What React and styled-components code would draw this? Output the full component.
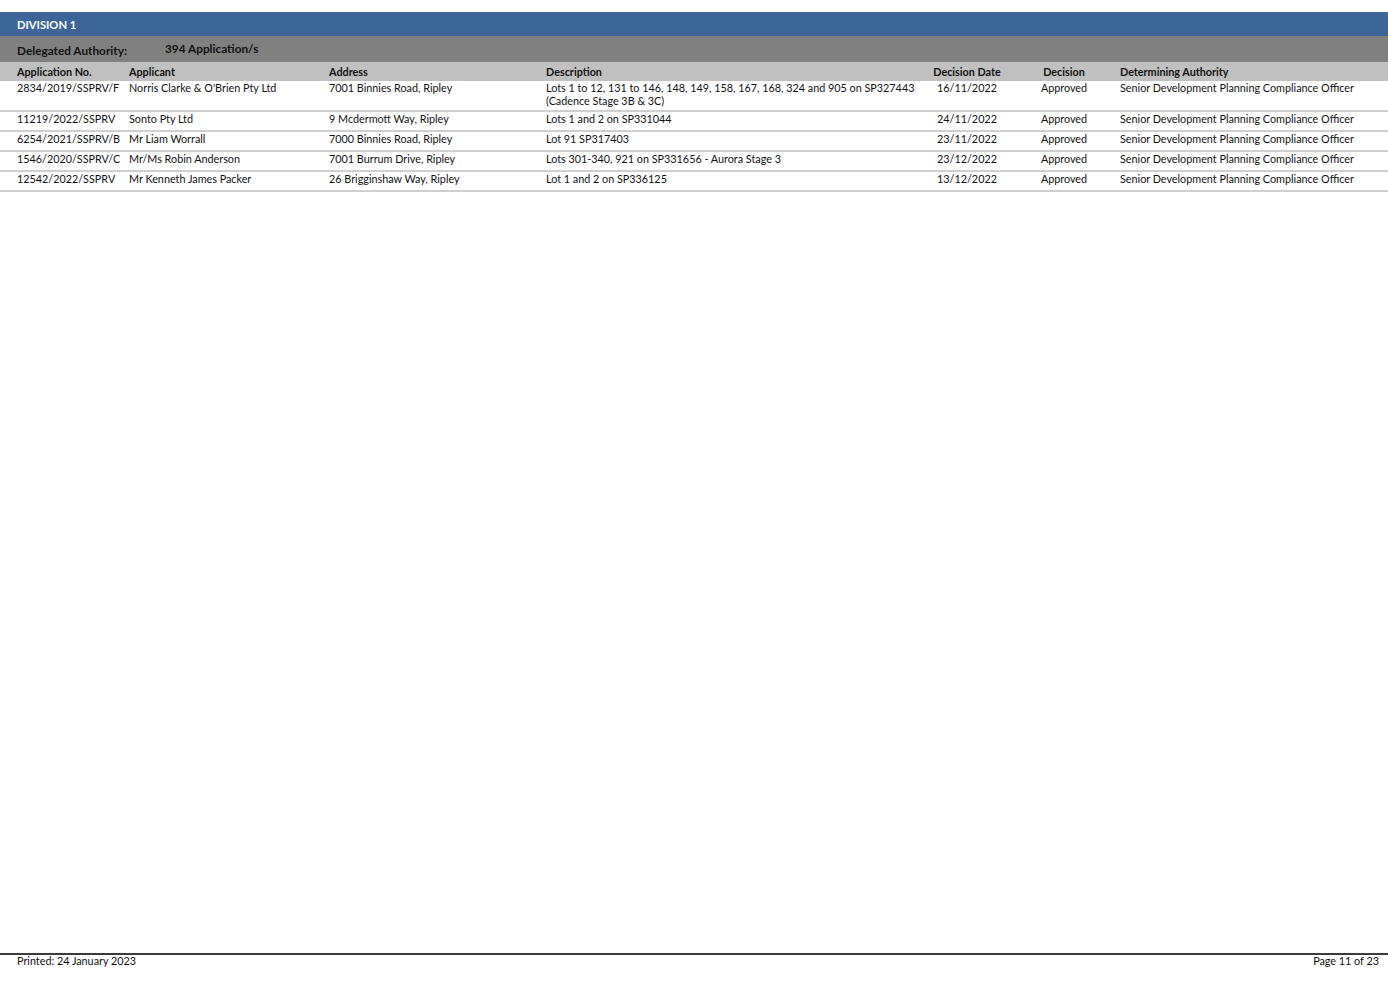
import styled, { createGlobalStyle } from "styled-components";

const GlobalStyle = createGlobalStyle`
  html, body {
    margin: 0;
    padding: 0;
    background: #ffffff;
  }
  body {
    font-family: Lato, "Liberation Sans", sans-serif;
    font-size: 10.8px;
    color: #111;
  }
`;

const COLUMNS = "112px 200px 217px 376px 90px 104px 1fr";

const Page = styled.div`
  display: flex;
  flex-direction: column;
  height: 981px;
  padding-top: 12px;
  box-sizing: border-box;
`;

const DivisionBar = styled.div`
  height: 24px;
  display: flex;
  align-items: center;
  padding-left: 17px;
  background: #3b6697;
  color: #fff;
  font-weight: 700;
  font-size: 11.2px;
`;

const AuthorityBar = styled.div`
  height: 26px;
  display: flex;
  align-items: center;
  padding-left: 17px;
  background: #808080;
  color: #111;
  font-weight: 700;
  font-size: 11.8px;
`;

const AuthorityLabel = styled.span`
  width: 148px;
  padding-top: 2px;
`;

const Count = styled.span`
  padding-bottom: 1px;
`;

const HeaderRow = styled.div`
  display: grid;
  grid-template-columns: ${COLUMNS};
  height: 19px;
  align-items: center;
  padding-left: 17px;
  background: #c0c0c0;
  font-weight: 700;
`;

const Row = styled.div`
  display: grid;
  grid-template-columns: ${COLUMNS};
  box-sizing: border-box;
  min-height: 20px;
  padding: 0 0 3px 17px;
  line-height: 13px;
  border-bottom: 2px solid #cfcfcf;
`;

const Cell = styled.div`
  text-align: ${(p) => (p.$center ? "center" : "left")};
  padding-left: ${(p) => (p.$indent ? "4px" : "0")};
  white-space: ${(p) => (p.$wrap ? "normal" : "nowrap")};
`;

const Footer = styled.div`
  margin-top: auto;
  height: 28px;
  box-sizing: border-box;
  border-top: 2px solid #3a3a3a;
  display: flex;
  justify-content: space-between;
  padding: 0 9px 0 17px;
  line-height: 11px;
`;

const applications = [
  {
    no: "2834/2019/SSPRV/F",
    applicant: "Norris Clarke & O'Brien Pty Ltd",
    address: "7001 Binnies Road, Ripley",
    description:
      "Lots 1 to 12, 131 to 146, 148, 149, 158, 167, 168, 324 and 905 on SP327443 (Cadence Stage 3B & 3C)",
    date: "16/11/2022",
  },
  {
    no: "11219/2022/SSPRV",
    applicant: "Sonto Pty Ltd",
    address: "9 Mcdermott Way, Ripley",
    description: "Lots 1 and 2 on SP331044",
    date: "24/11/2022",
  },
  {
    no: "6254/2021/SSPRV/B",
    applicant: "Mr Liam Worrall",
    address: "7000 Binnies Road, Ripley",
    description: "Lot 91 SP317403",
    date: "23/11/2022",
  },
  {
    no: "1546/2020/SSPRV/C",
    applicant: "Mr/Ms Robin Anderson",
    address: "7001 Burrum Drive, Ripley",
    description: "Lots 301-340, 921 on SP331656 - Aurora Stage 3",
    date: "23/12/2022",
  },
  {
    no: "12542/2022/SSPRV",
    applicant: "Mr Kenneth James Packer",
    address: "26 Brigginshaw Way, Ripley",
    description: "Lot 1 and 2 on SP336125",
    date: "13/12/2022",
  },
];

const App = () => {
  return (
    <Page>
      <GlobalStyle />
      <DivisionBar>DIVISION 1</DivisionBar>
      <AuthorityBar>
        <AuthorityLabel>Delegated Authority:</AuthorityLabel>
        <Count>394 Application/s</Count>
      </AuthorityBar>
      <HeaderRow>
        <Cell>Application No.</Cell>
        <Cell>Applicant</Cell>
        <Cell>Address</Cell>
        <Cell>Description</Cell>
        <Cell $center>Decision Date</Cell>
        <Cell $center>Decision</Cell>
        <Cell $indent>Determining Authority</Cell>
      </HeaderRow>
      {applications.map((app) => (
        <Row key={app.no}>
          <Cell>{app.no}</Cell>
          <Cell>{app.applicant}</Cell>
          <Cell>{app.address}</Cell>
          <Cell $wrap>{app.description}</Cell>
          <Cell $center>{app.date}</Cell>
          <Cell $center>Approved</Cell>
          <Cell $indent>Senior Development Planning Compliance Officer</Cell>
        </Row>
      ))}
      <Footer>
        <span>Printed: 24 January 2023</span>
        <span>Page 11 of 23</span>
      </Footer>
    </Page>
  );
};

export default App;
